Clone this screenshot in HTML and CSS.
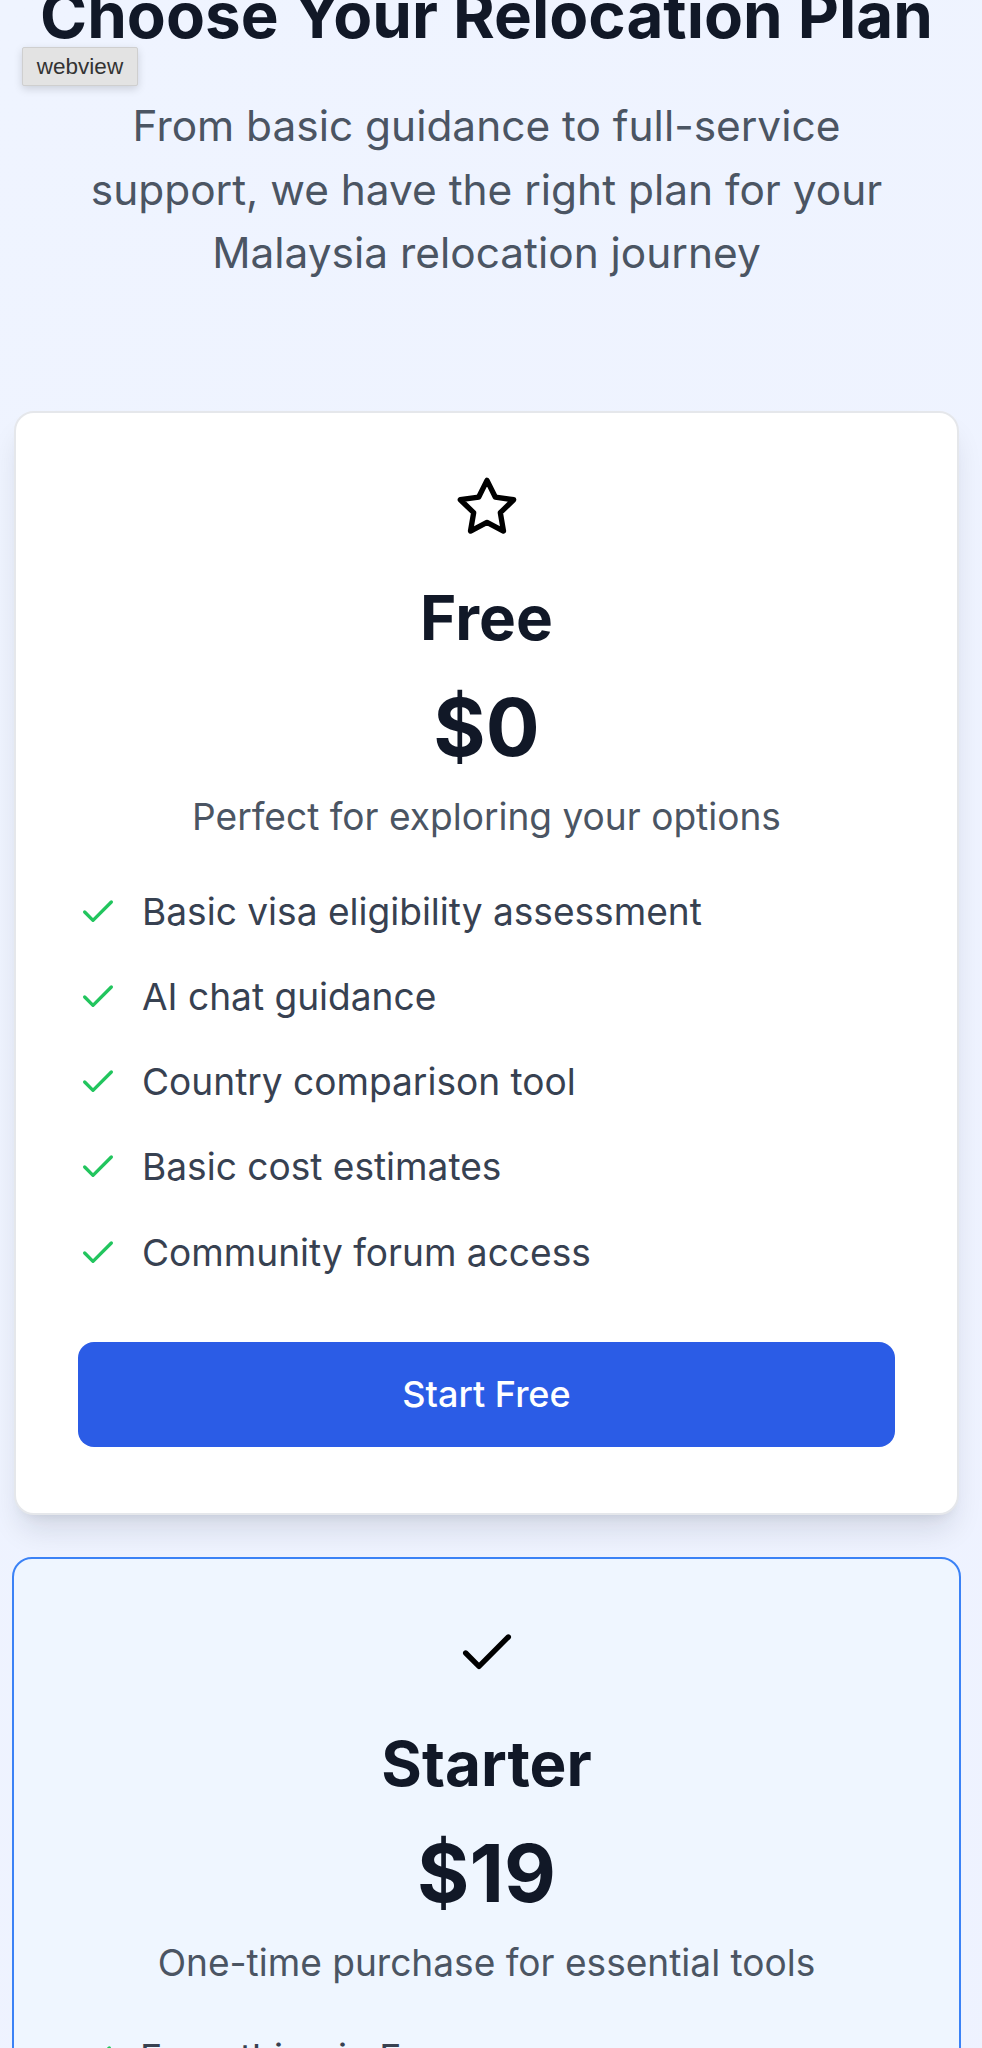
FILE: index.html
```html
<!DOCTYPE html>
<html lang="en">
<head>
<meta charset="utf-8">
<title>Choose Your Relocation Plan</title>
<link rel="stylesheet" href="styles.css">
</head>
<body>
<div class="badge">webview</div>
<main class="page">
  <header class="intro">
    <h1 class="intro-title">Choose Your Relocation Plan</h1>
    <p class="intro-text">From basic guidance to full-service support, we have the right plan for your Malaysia relocation journey</p>
  </header>

  <div class="plans">
    <section class="plan">
      <svg class="plan-icon" viewBox="0 0 24 24" fill="none" stroke="#000" stroke-width="2" stroke-linecap="round" stroke-linejoin="round"><polygon points="12 2 15.09 8.26 22 9.27 17 14.14 18.18 21.02 12 17.77 5.82 21.02 7 14.14 2 9.27 8.91 8.26 12 2"/></svg>
      <h2 class="plan-name">Free</h2>
      <div class="plan-price">$0</div>
      <p class="plan-desc">Perfect for exploring your options</p>
      <ul class="features">
        <li><svg viewBox="0 0 24 24" fill="none" stroke="#22c55e" stroke-width="2" stroke-linecap="round" stroke-linejoin="round"><path d="M20 6 9 17l-5-5"/></svg><span>Basic visa eligibility assessment</span></li>
        <li><svg viewBox="0 0 24 24" fill="none" stroke="#22c55e" stroke-width="2" stroke-linecap="round" stroke-linejoin="round"><path d="M20 6 9 17l-5-5"/></svg><span>AI chat guidance</span></li>
        <li><svg viewBox="0 0 24 24" fill="none" stroke="#22c55e" stroke-width="2" stroke-linecap="round" stroke-linejoin="round"><path d="M20 6 9 17l-5-5"/></svg><span>Country comparison tool</span></li>
        <li><svg viewBox="0 0 24 24" fill="none" stroke="#22c55e" stroke-width="2" stroke-linecap="round" stroke-linejoin="round"><path d="M20 6 9 17l-5-5"/></svg><span>Basic cost estimates</span></li>
        <li><svg viewBox="0 0 24 24" fill="none" stroke="#22c55e" stroke-width="2" stroke-linecap="round" stroke-linejoin="round"><path d="M20 6 9 17l-5-5"/></svg><span>Community forum access</span></li>
      </ul>
      <button class="btn" type="button">Start Free</button>
    </section>

    <section class="plan plan-featured">
      <svg class="plan-icon" viewBox="0 0 24 24" fill="none" stroke="#000" stroke-width="2" stroke-linecap="round" stroke-linejoin="round"><path d="M20 6 9 17l-5-5"/></svg>
      <h2 class="plan-name">Starter</h2>
      <div class="plan-price">$19</div>
      <p class="plan-desc">One-time purchase for essential tools</p>
      <ul class="features">
        <li><svg viewBox="0 0 24 24" fill="none" stroke="#22c55e" stroke-width="2" stroke-linecap="round" stroke-linejoin="round"><path d="M20 6 9 17l-5-5"/></svg><span>Everything in Free</span></li>
        <li><svg viewBox="0 0 24 24" fill="none" stroke="#22c55e" stroke-width="2" stroke-linecap="round" stroke-linejoin="round"><path d="M20 6 9 17l-5-5"/></svg><span>Detailed visa roadmap</span></li>
        <li><svg viewBox="0 0 24 24" fill="none" stroke="#22c55e" stroke-width="2" stroke-linecap="round" stroke-linejoin="round"><path d="M20 6 9 17l-5-5"/></svg><span>Document checklist</span></li>
        <li><svg viewBox="0 0 24 24" fill="none" stroke="#22c55e" stroke-width="2" stroke-linecap="round" stroke-linejoin="round"><path d="M20 6 9 17l-5-5"/></svg><span>Email support</span></li>
      </ul>
      <button class="btn" type="button">Get Starter</button>
    </section>
  </div>
</main>
</body>
</html>
```

FILE: styles.css
```css
html, body {
  margin: 0;
  padding: 0;
}

body {
  font-family: Inter, "Noto Sans", sans-serif;
  background: linear-gradient(135deg, #eff4ff 0%, #eef2ff 100%);
  color: #111827;
}

.badge {
  position: absolute;
  left: 22px;
  top: 47px;
  width: 116px;
  height: 39px;
  box-sizing: border-box;
  display: flex;
  align-items: center;
  justify-content: center;
  background: #e3e3e3;
  border: 1px solid #cfcfcf;
  border-radius: 2px;
  box-shadow: 0 3px 8px rgba(0, 0, 0, 0.15);
  font-family: "Liberation Sans", Arial, sans-serif;
  font-size: 22.5px;
  color: #333;
  z-index: 10;
}

.page {
  padding: 0 23px 40px 14px;
}

.intro {
  text-align: center;
  margin-bottom: 126px;
}

.intro-title {
  margin: -22.65px 0 0;
  font-size: 63.7px;
  line-height: 76.8px;
  font-weight: 700;
  color: #111827;
}

.intro-text {
  margin: 40px auto 0;
  max-width: 835px;
  font-size: 42.4px;
  line-height: 63.5px;
  color: #4b5563;
}

.plans {
  display: flex;
  flex-direction: column;
  gap: 42px;
}

.plan {
  background: #fff;
  border: 2px solid #e5e7eb;
  border-radius: 20px;
  padding: 62px 62px 66px;
  text-align: center;
  box-shadow: 0 20px 30px -6px rgba(15, 23, 42, 0.12), 0 8px 12px -8px rgba(15, 23, 42, 0.1);
}

.plan-featured {
  background: #eff6ff;
  border-color: #3b82f6;
  margin: 0 -2px;
  box-shadow: none;
}

.plan-icon {
  display: block;
  width: 64px;
  height: 64px;
  margin: 0 auto 43.5px;
}

.plan-name {
  margin: 0 0 28.5px;
  font-size: 62px;
  line-height: 72px;
  font-weight: 700;
  color: #111827;
}

.plan-price {
  margin: 0 0 18px;
  font-size: 80px;
  line-height: 88px;
  font-weight: 700;
  color: #111827;
}

.plan-desc {
  margin: 0 0 39px;
  font-size: 37.1px;
  line-height: 56px;
  color: #4b5563;
}

.features {
  list-style: none;
  margin: 0 0 61px;
  padding: 0;
  display: flex;
  flex-direction: column;
  gap: 29.25px;
  text-align: left;
}

.features li {
  display: flex;
  align-items: center;
  gap: 24px;
  font-size: 37.1px;
  line-height: 56px;
  color: #374151;
}

.features svg {
  flex: none;
  width: 40px;
  height: 40px;
}

.btn {
  display: block;
  width: 100%;
  height: 105px;
  border: 0;
  border-radius: 16px;
  background: #2b5ce6;
  color: #fff;
  font-family: Inter, "Noto Sans", sans-serif;
  font-size: 36px;
  font-weight: 500;
  line-height: 56px;
  cursor: pointer;
}
```
